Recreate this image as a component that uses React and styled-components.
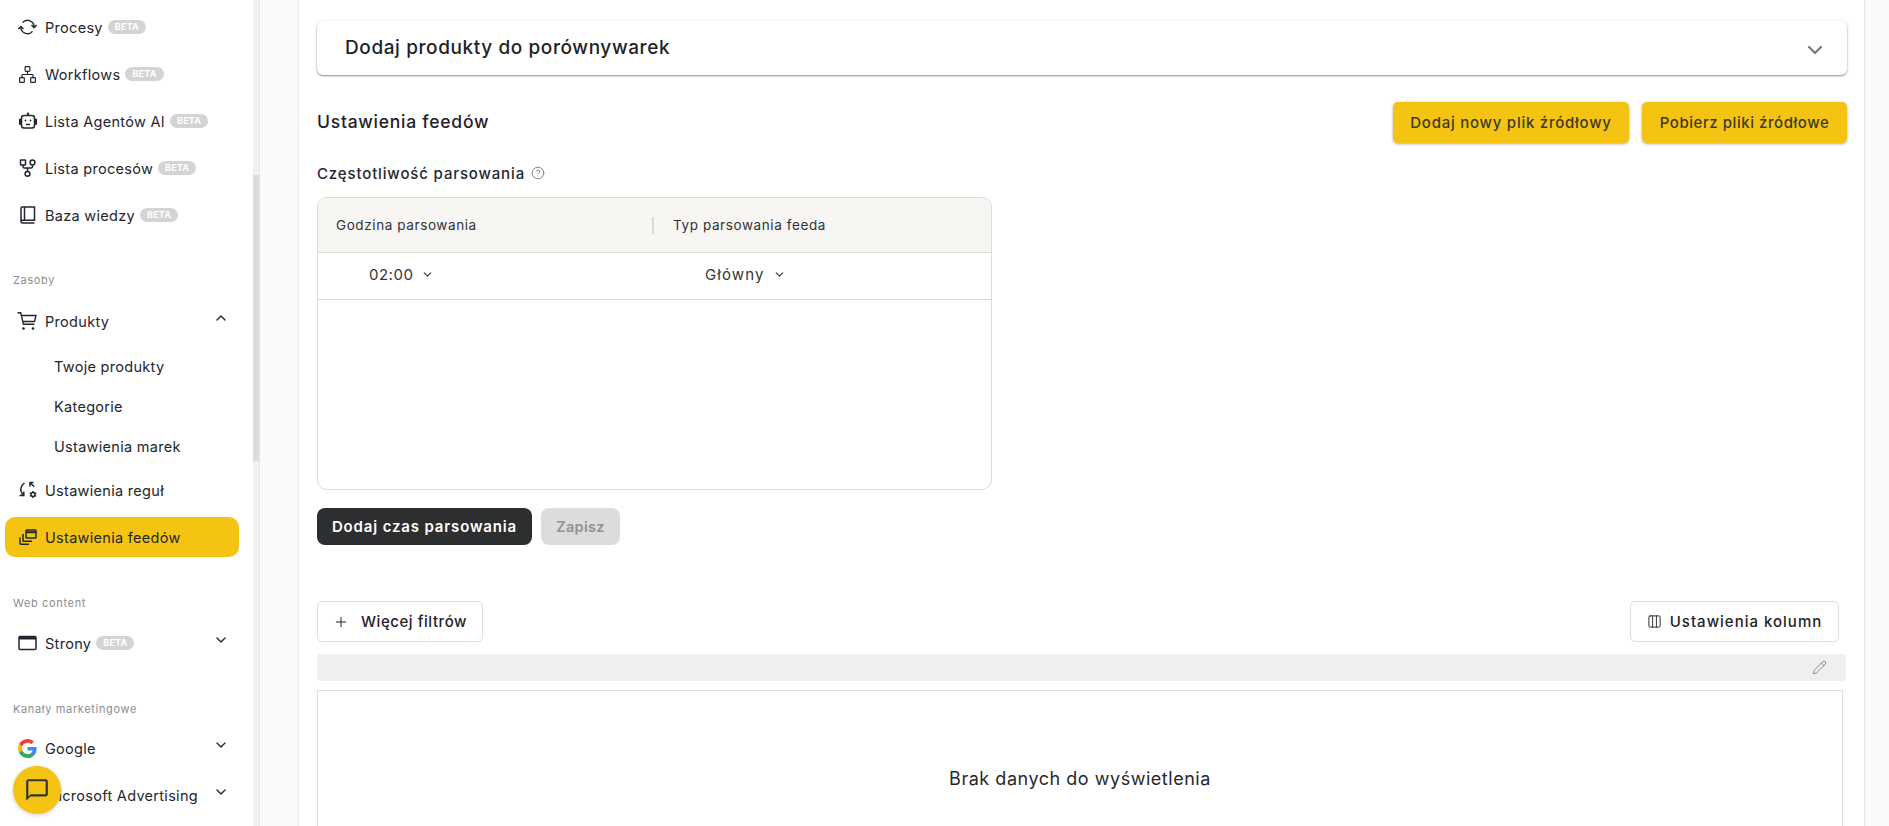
import React from 'react'
import styled, { createGlobalStyle } from 'styled-components'
import { ChevronDown, ChevronUp, CircleHelp, Columns3, Network, Plus, Pencil } from 'lucide-react'

const GlobalStyle = createGlobalStyle`
  html, body { margin: 0; padding: 0; height: 100%; overflow: hidden; }
  body { font-family: 'Inter', 'Noto Sans', sans-serif; color: #1f2229; background: #fff; }
  * { box-sizing: border-box; }
`

const Page = styled.div`
  display: grid;
  grid-template-columns: 253px 6px 1px 1fr;
  height: 826px;
  overflow: hidden;
  position: relative;
`

const Sidebar = styled.nav`
  background: #fff;
  padding: 7px 14px 0 5px;
  overflow: hidden;
  display: flex;
  flex-direction: column;
`

const ScrollTrack = styled.div`
  background: #f1f1f1;
  display: flex;
  flex-direction: column;
`
const ScrollThumb = styled.div`
  margin-top: 175px;
  height: 286px;
  background: #dcdcdc;
`
const SideBorder = styled.div`
  background: #e6e6e6;
`

const NavRow = styled.div`
  flex: none;
  height: 40px;
  margin-bottom: 7px;
  display: flex;
  align-items: center;
  gap: 8px;
  padding: 0 10px 0 13px;
  border-radius: 10px;
  background: ${p => (p.$active ? '#f5c412' : 'transparent')};
  font-size: 14.5px;
  letter-spacing: 0.3px;
  color: #23262e;
  svg { flex: none; }
`
const NavLabel = styled.span`
  white-space: nowrap;
`
const NavIcon = styled.span`
  width: 19px;
  height: 20px;
  flex: none;
  display: flex;
  align-items: center;
  justify-content: center;
`
const Beta = styled.span`
  font-size: 9px;
  font-weight: 700;
  letter-spacing: 0.2px;
  color: #fff;
  background: #d4d4d4;
  border-radius: 8px;
  padding: 0 7px;
  height: 14px;
  line-height: 14px;
  margin-left: -3px;
`
const Caret = styled.span`
  margin-left: auto;
  margin-top: -7px;
  display: flex;
  color: #23262e;
`
const SubRow = styled.div`
  flex: none;
  height: 40px;
  display: flex;
  align-items: center;
  padding-left: 49px;
  font-size: 14.5px;
  letter-spacing: 0.3px;
  color: #23262e;
`
const SubList = styled.div`
  margin-top: -2px;
  margin-bottom: 4px;
`
const SectionTitle = styled.div`
  flex: none;
  height: 16px;
  line-height: 16px;
  font-size: 11px;
  color: #8d8d8d;
  padding-left: 8px;
  margin: ${p => p.$top}px 0 ${p => p.$bottom}px;
  letter-spacing: 0.65px;
`

const Main = styled.main`
  background: #fafafa;
  padding: 0 24px 0 38px;
  overflow: hidden;
`
const Panel = styled.div`
  background: #fff;
  border-left: 1px solid #ececec;
  border-right: 1px solid #e6e6e6;
  height: 100%;
  padding: 21px 17px 0 18px;
  overflow: hidden;
`
const Accordion = styled.div`
  height: 54px;
  border-radius: 6px;
  background: #fff;
  display: flex;
  align-items: center;
  justify-content: space-between;
  padding: 0 20px 2px 28px;
  box-shadow: 0 1px 2px rgba(0, 0, 0, 0.45), 0 0 4px rgba(0, 0, 0, 0.04);
  svg { margin-top: 6px; }
`
const AccordionTitle = styled.h2`
  margin: 0;
  font-size: 19px;
  font-weight: 500;
  letter-spacing: 0.6px;
  color: #1f2229;
`
const HeaderRow = styled.div`
  display: flex;
  align-items: center;
  justify-content: space-between;
  margin-top: 27px;
`
const SectionHeading = styled.h3`
  margin: 0 0 2px;
  font-size: 17.5px;
  font-weight: 500;
  letter-spacing: 0.75px;
  color: #1f2229;
`
const Actions = styled.div`
  display: flex;
  gap: 13px;
`
const YellowButton = styled.button`
  height: 41px;
  width: ${p => p.$w}px;
  border: 0;
  border-radius: 5px;
  background: #f5c412;
  color: #3d3a22;
  font: 450 15px 'Inter', sans-serif;
  letter-spacing: ${p => p.$spacing}px;
  box-shadow: 0 1px 3px rgba(0, 0, 0, 0.35);
`
const FieldLabel = styled.div`
  margin-top: 20px;
  display: flex;
  align-items: center;
  gap: 6px;
  height: 20px;
  font-size: 15px;
  font-weight: 450;
  letter-spacing: 0.85px;
  color: #26282f;
`
const TableBox = styled.div`
  margin-top: 14px;
  width: 675px;
  height: 293px;
  border: 1px solid #dcdcdc;
  border-radius: 10px;
  overflow: hidden;
`
const TableHead = styled.div`
  height: 55px;
  background: #f7f6f3;
  border-bottom: 1px solid #dcdcdc;
  display: grid;
  grid-template-columns: 334px 1fr;
  align-items: center;
  font-size: 13.5px;
  font-weight: 400;
  letter-spacing: 0.6px;
  color: #30323a;
`
const HeadCell = styled.div`
  padding-left: ${p => p.$pad}px;
  height: 17px;
  line-height: 17px;
  border-left: ${p => (p.$divider ? '2px solid #dadada' : '0')};
`
const TableRow = styled.div`
  height: 47px;
  padding-bottom: 4px;
  border-bottom: 1px solid #dcdcdc;
  display: grid;
  grid-template-columns: 334px 1fr;
  align-items: center;
  font-size: 15px;
  color: #33353c;
`
const Cell = styled.div`
  padding-left: ${p => p.$pad}px;
  display: flex;
  align-items: center;
  gap: 8px;
  letter-spacing: ${p => p.$spacing}px;
`
const FormActions = styled.div`
  margin-top: 18px;
  display: flex;
  gap: 9px;
`
const DarkButton = styled.button`
  height: 37px;
  width: 215px;
  border: 0;
  border-radius: 8px;
  background: #2d2e30;
  color: #fff;
  font: 600 15px 'Inter', sans-serif;
  letter-spacing: 0.85px;
`
const DisabledButton = styled.button`
  height: 37px;
  width: 79px;
  border: 0;
  border-radius: 8px;
  background: #dcdcdc;
  color: #929292;
  font: 600 14.5px 'Inter', sans-serif;
  letter-spacing: 0.3px;
`
const Toolbar = styled.div`
  margin-top: 56px;
  display: flex;
  justify-content: space-between;
  padding-right: 8px;
`
const OutlineButton = styled.button`
  height: 41px;
  width: ${p => p.$w}px;
  background: #fff;
  border: 1px solid #dedede;
  border-radius: 5px;
  display: flex;
  align-items: center;
  justify-content: center;
  gap: ${p => p.$gap}px;
  font: 450 15px 'Inter', sans-serif;
  letter-spacing: ${p => p.$spacing}px;
  color: #1f2229;
`
const EditBar = styled.div`
  margin: 12px 1px 0 0;
  height: 27px;
  background: #efefef;
  border-radius: 4px;
  display: flex;
  align-items: center;
  justify-content: flex-end;
  padding-right: 19px;
  color: #8a8a8a;
`
const EmptyBox = styled.div`
  margin: 9px 4px 0 0;
  height: 300px;
  border: 1px solid #dedede;
  display: flex;
  justify-content: center;
  padding-top: 77px;
  font-size: 18px;
  letter-spacing: 0.53px;
  color: #26282f;
`
const ChatBubble = styled.button`
  position: absolute;
  left: 13px;
  top: 766px;
  width: 48px;
  height: 48px;
  border: 0;
  border-radius: 50%;
  background: #f5c412;
  display: flex;
  align-items: center;
  justify-content: center;
  box-shadow: 0 1px 4px rgba(0, 0, 0, 0.2);
`

const SyncIcon = () => (
  <svg width="21" height="20" viewBox="0 0 20 20" fill="none" stroke="currentColor" strokeWidth="1.4">
    <path d="M5 5.600A6.600 6.600 0 0 1 16.600 10.400" />
    <path d="M15 14.400A6.600 6.600 0 0 1 3.400 9.600" />
    <path d="M0.800 12.100l2.600-2.700 2.600 2.700M14 8l2.600 2.700L19.200 8" />
  </svg>
)

const BotIcon = () => (
  <svg width="20" height="20" viewBox="0 0 20 20" fill="none" stroke="currentColor" strokeWidth="1.500">
    <rect x="3.500" y="4.500" width="13" height="12.500" rx="2.500" />
    <path d="M3 8.500H1.700v4.500H3M17 8.500h1.300v4.500H17" fill="currentColor" />
    <circle cx="10" cy="2.800" r="1.200" fill="currentColor" stroke="none" />
    <path d="M8 13.500h4" />
    <circle cx="7.500" cy="9.500" r=".9" fill="currentColor" stroke="none" />
    <circle cx="12.500" cy="9.500" r=".9" fill="currentColor" stroke="none" />
  </svg>
)

const FlowIcon = () => (
  <svg width="20" height="20" viewBox="0 0 20 20" fill="none" stroke="currentColor" strokeWidth="1.500">
    <rect x="2.500" y="2" width="5" height="5" rx=".5" />
    <circle cx="14.500" cy="4.500" r="2.400" />
    <circle cx="9.500" cy="15.800" r="2.400" />
    <path d="M5 7v1.500A1.500 1.500 0 0 0 6.500 10h6.500a1.500 1.500 0 0 0 1.500-1.500V7M9.500 10v3.400" />
  </svg>
)

const BookIcon = () => (
  <svg width="20" height="20" viewBox="0 0 20 20" fill="none" stroke="currentColor" strokeWidth="1.500">
    <path d="M3 16V3.200c0-.7.500-1.200 1.200-1.200H16.500v13.200H4.800C3.800 15.200 3 15.700 3 16.700c0 .8.700 1.300 1.500 1.300h12" />
    <path d="M6.500 2v13" />
  </svg>
)

const CartIcon = () => (
  <svg width="20" height="20" viewBox="0 0 20 20" fill="none" stroke="currentColor" strokeWidth="1.400" style={{ marginLeft: -2 }}>
    <path d="M0.500 1.700h3.200l2.700 11.600h11" />
    <path d="M4.500 4.500h14.500l-1.500 6H5.800" />
    <circle cx="6.500" cy="17.500" r="1.300" fill="currentColor" stroke="none" />
    <circle cx="16" cy="17.500" r="1.300" fill="currentColor" stroke="none" />
  </svg>
)

const RulesIcon = () => (
  <svg width="20" height="20" viewBox="0 0 20 20" fill="none" stroke="currentColor" strokeWidth="1.500">
    <path d="M6.500 3C3.500 5 2.500 8 3 11c.3 1.600 1 3 2.500 4.200" />
    <path d="M1.500 15.500h4.300v-4" />
    <path d="M12 6.500V2.500h3.500M12.200 2.700l4 4" />
    <circle cx="15" cy="14.500" r="2" />
    <path d="M15 11v1.200M15 16.800V18M11.800 12.800l1 .6M17.200 15.600l1 .6M11.800 16.200l1-.6M17.200 13.400l1-.6" />
  </svg>
)

const FeedIcon = () => (
  <svg width="20" height="20" viewBox="0 0 20 20" fill="none" stroke="currentColor" strokeWidth="1.500">
    <rect x="8" y="3" width="10" height="8" rx=".8" />
    <path d="M8 5.200h10" strokeWidth="2" />
    <path d="M5 7v6.500a.8.8 0 0 0 .8.8H14" />
    <path d="M2 10.500v6a.8.8 0 0 0 .8.8H11" />
  </svg>
)

const WindowIcon = () => (
  <svg width="19" height="20" viewBox="0 0 19 20" fill="none" stroke="currentColor" strokeWidth="1.500">
    <rect x="1" y="3.500" width="17" height="13" rx="1" />
    <path d="M1 5h17" strokeWidth="3" />
  </svg>
)

const GoogleIcon = () => (
  <svg width="19" height="19" viewBox="0 0 48 48">
    <path fill="#EA4335" d="M24 9.500c3.500 0 6.700 1.200 9.200 3.600l6.900-6.900C35.900 2.400 30.400 0 24 0 14.600 0 6.500 5.400 2.600 13.200l8 6.200C12.500 13.700 17.800 9.500 24 9.500z" />
    <path fill="#4285F4" d="M47 24.500c0-1.600-.1-3.100-.4-4.500H24v9h12.900c-.6 3-2.200 5.500-4.700 7.200l7.700 6C44.400 38 47 31.800 47 24.500z" />
    <path fill="#FBBC05" d="M10.600 28.600c-.5-1.400-.8-3-.8-4.600s.3-3.200.8-4.600l-8-6.200C.9 16.500 0 20.100 0 24s.9 7.500 2.600 10.800l8-6.200z" />
    <path fill="#34A853" d="M24 48c6.500 0 11.900-2.100 15.900-5.800l-7.700-6c-2.200 1.500-4.900 2.300-8.200 2.300-6.200 0-11.500-4.200-13.400-9.900l-8 6.200C6.500 42.600 14.600 48 24 48z" />
  </svg>
)

const ChatIcon = () => (
  <svg width="26" height="26" viewBox="0 0 24 24" fill="#333">
    <path d="M20 2H4c-1.100 0-2 .9-2 2v18l4-4h14c1.100 0 2-.9 2-2V4c0-1.100-.9-2-2-2zm0 14H6l-2 2V4h16v12z" />
  </svg>
)

function App() {
  return (
    <Page>
      <GlobalStyle />
      <Sidebar>
        <NavRow><NavIcon><SyncIcon /></NavIcon><NavLabel>Procesy</NavLabel><Beta>BETA</Beta></NavRow>
        <NavRow><NavIcon><Network size={19} strokeWidth={1.5} /></NavIcon><NavLabel>Workflows</NavLabel><Beta>BETA</Beta></NavRow>
        <NavRow><NavIcon><BotIcon /></NavIcon><NavLabel>Lista Agentów AI</NavLabel><Beta>BETA</Beta></NavRow>
        <NavRow><NavIcon><FlowIcon /></NavIcon><NavLabel>Lista procesów</NavLabel><Beta>BETA</Beta></NavRow>
        <NavRow><NavIcon><BookIcon /></NavIcon><NavLabel>Baza wiedzy</NavLabel><Beta>BETA</Beta></NavRow>

        <SectionTitle $top={30} $bottom={13}>Zasoby</SectionTitle>
        <NavRow><NavIcon><CartIcon /></NavIcon><NavLabel>Produkty</NavLabel><Caret><ChevronUp size={16} /></Caret></NavRow>
        <SubList>
          <SubRow>Twoje produkty</SubRow>
          <SubRow>Kategorie</SubRow>
          <SubRow>Ustawienia marek</SubRow>
        </SubList>
        <NavRow><NavIcon><RulesIcon /></NavIcon><NavLabel>Ustawienia reguł</NavLabel></NavRow>
        <NavRow $active><NavIcon><FeedIcon /></NavIcon><NavLabel>Ustawienia feedów</NavLabel></NavRow>

        <SectionTitle $top={31} $bottom={12}>Web content</SectionTitle>
        <NavRow><NavIcon><WindowIcon /></NavIcon><NavLabel>Strony</NavLabel><Beta>BETA</Beta><Caret><ChevronDown size={16} /></Caret></NavRow>

        <SectionTitle $top={31} $bottom={11}>Kanały marketingowe</SectionTitle>
        <NavRow><NavIcon><GoogleIcon /></NavIcon><NavLabel>Google</NavLabel><Caret><ChevronDown size={16} /></Caret></NavRow>
        <NavRow><NavIcon /><NavLabel>Microsoft Advertising</NavLabel><Caret><ChevronDown size={16} /></Caret></NavRow>
      </Sidebar>
      <ScrollTrack><ScrollThumb /></ScrollTrack>
      <SideBorder />
      <Main>
        <Panel>
          <Accordion>
            <AccordionTitle>Dodaj produkty do porównywarek</AccordionTitle>
            <ChevronDown size={24} color="#7a7a7a" strokeWidth={2.2} />
          </Accordion>
          <HeaderRow>
            <SectionHeading>Ustawienia feedów</SectionHeading>
            <Actions>
              <YellowButton $w={236} $spacing={0.75}>Dodaj nowy plik źródłowy</YellowButton>
              <YellowButton $w={205} $spacing={0.55}>Pobierz pliki źródłowe</YellowButton>
            </Actions>
          </HeaderRow>
          <FieldLabel>Częstotliwość parsowania <CircleHelp size={14} color="#777" strokeWidth={1.5} /></FieldLabel>
          <TableBox>
            <TableHead>
              <HeadCell $pad={18}>Godzina parsowania</HeadCell>
              <HeadCell $pad={19} $divider>Typ parsowania feeda</HeadCell>
            </TableHead>
            <TableRow>
              <Cell $pad={51} $spacing={0.5}>02:00 <ChevronDown size={13} /></Cell>
              <Cell $pad={53} $spacing={1.1}>Główny <ChevronDown size={13} /></Cell>
            </TableRow>
          </TableBox>
          <FormActions>
            <DarkButton>Dodaj czas parsowania</DarkButton>
            <DisabledButton>Zapisz</DisabledButton>
          </FormActions>
          <Toolbar>
            <OutlineButton $w={166} $gap={12} $spacing={0.55}><Plus size={16} strokeWidth={1.5} />Więcej filtrów</OutlineButton>
            <OutlineButton $w={209} $gap={8} $spacing={1}><Columns3 size={15} strokeWidth={1.5} />Ustawienia kolumn</OutlineButton>
          </Toolbar>
          <EditBar><Pencil size={15} strokeWidth={1.6} /></EditBar>
          <EmptyBox>Brak danych do wyświetlenia</EmptyBox>
        </Panel>
      </Main>
      <ChatBubble><ChatIcon /></ChatBubble>
    </Page>
  )
}

export default App
